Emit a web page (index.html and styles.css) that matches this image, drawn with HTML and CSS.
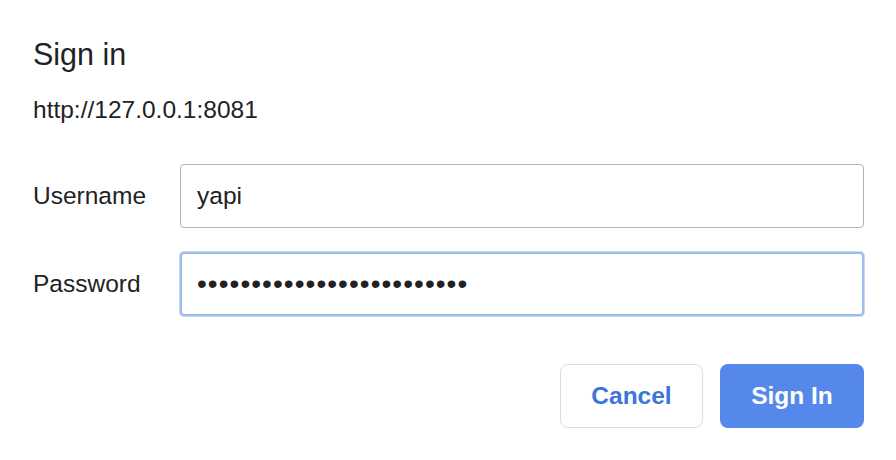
FILE: index.html
```html
<!DOCTYPE html>
<html>
<head>
<meta charset="utf-8">
<link rel="stylesheet" href="styles.css">
</head>
<body>
<div class="dialog">
  <h1 class="title">Sign in</h1>
  <div class="origin">http://127.0.0.1:8081</div>
  <div class="fields">
    <label class="label" for="u">Username</label>
    <input class="field" id="u" type="text" value="yapi" readonly>
    <label class="label" for="p">Password</label>
    <input class="field field-focus" id="p" type="password" value="abcdefghijklmnopqrstuvwxy" readonly>
  </div>
  <div class="actions">
    <button class="btn btn-cancel">Cancel</button>
    <button class="btn btn-primary">Sign In</button>
  </div>
</div>
</body>
</html>
```
FILE: styles.css
```css
html, body {
  margin: 0;
  padding: 0;
  background: #ffffff;
}
body {
  font-family: "Liberation Sans", Arial, sans-serif;
  color: #202124;
}
.dialog {
  width: 896px;
  height: 460px;
  box-sizing: border-box;
  padding: 36px 32px 0 33px;
}
.title {
  margin: 0;
  font-weight: 400;
  font-size: 30.5px;
  line-height: 36px;
  color: #222;
}
.origin {
  margin-top: 23px;
  font-size: 24.5px;
  line-height: 30px;
  color: #222;
}
.fields {
  margin-top: 39px;
  display: grid;
  grid-template-columns: 147px 684px;
  row-gap: 24px;
  align-items: center;
}
.label {
  font-size: 24.5px;
  color: #222;
}
.field {
  box-sizing: border-box;
  width: 684px;
  height: 64px;
  border: 1px solid #b3b3b3;
  border-radius: 4px;
  padding: 0 16px;
  font-family: "Liberation Sans", Arial, sans-serif;
  font-size: 24.5px;
  color: #222;
  background: #fff;
  outline: none;
  margin: 0;
}
.field-focus {
  border: 2px solid #9dbdee;
  box-shadow: 0 0 0 1px #c9dcf7;
  padding-left: 15px;
  font-size: 28px;
  letter-spacing: 1.05px;
}
.actions {
  margin-top: 48px;
  display: flex;
  justify-content: flex-end;
  gap: 17px;
  padding-right: 0;
}
.btn {
  box-sizing: border-box;
  height: 64px;
  border-radius: 8px;
  font-family: "Liberation Sans", Arial, sans-serif;
  font-size: 24.5px;
  font-weight: 700;
  margin: 0;
  padding: 0;
}
.btn-cancel {
  width: 143px;
  background: #fff;
  border: 1px solid #dcdcdc;
  color: #3c75d9;
}
.btn-primary {
  width: 144px;
  background: #5588ea;
  border: none;
  color: #fff;
}
```
